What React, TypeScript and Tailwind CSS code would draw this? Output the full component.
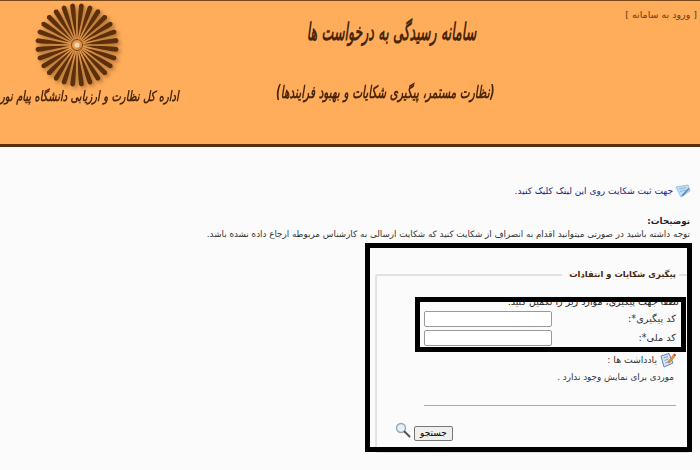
const petals = Array.from({ length: 28 }, (_, i) => (i * 360) / 28 + 6.4);

const Logo = () => (
  <svg width="90" height="90" viewBox="-45 -45 90 90" className="-mt-px drop-shadow-[2px_2px_2px_rgba(90,50,10,0.55)]">
    {petals.map((a) => (
      <path
        key={a}
        d="M0 -5 C-0.4 -14 -2.4 -26 -2.4 -40 Q0 -43.5 2.4 -40 C2.4 -26 0.4 -14 0 -5Z"
        fill="#5c300a"
        transform={`rotate(${a})`}
      />
    ))}
    <circle r="5.5" fill="none" stroke="#5c300a" strokeWidth="0.8" />
    <circle r="2.6" fill="#f3d3b0" />
  </svg>
);

const FormIcon = () => (
  <svg width="16" height="16" viewBox="0 0 16 16">
    <path d="M1 4 L13 2 L15 8 L6 14 Z" fill="#c4def4" stroke="#9cc3e4" strokeWidth="1" />
    <path d="M4 6 L11 4.5 M5 8.5 L11 7" stroke="#8db6da" strokeWidth="1" />
    <path d="M7 13 L14 5.5" stroke="#4f86b8" strokeWidth="1.6" />
  </svg>
);

const NoteIcon = () => (
  <svg width="16" height="16" viewBox="0 0 16 16">
    <path d="M1 4 L9 1.5 L13 11 L4 15 Z" fill="#d7e7f7" stroke="#5f86b5" strokeWidth="1" />
    <path d="M3.5 6 L8 4.5 M4.5 8.5 L8.5 7 M5.5 11 L9 9.5" stroke="#7b9cc4" strokeWidth="1" />
    <path d="M8 10 L14 2 L15.5 3.5 L9.5 11 Z" fill="#e8a020" stroke="#b5541a" strokeWidth="0.6" />
    <path d="M14 2 L15.5 3.5" stroke="#d8322a" strokeWidth="1.5" />
  </svg>
);

const SearchIcon = () => (
  <svg width="16" height="16" viewBox="0 0 16 16">
    <circle cx="6" cy="6" r="4.5" fill="#e6eef6" stroke="#97a5b5" strokeWidth="1.3" />
    <path d="M9.5 9.5 L14.5 14.5" stroke="#555" strokeWidth="2" strokeLinecap="round" />
  </svg>
);

export default function App() {
  return (
    <div dir="rtl" className="relative h-[470px] w-[700px] overflow-hidden bg-[#fbfbfb] font-['DejaVu_Sans',sans-serif] text-[8.75px] text-[#333]">
      <header className="flex h-[147px] border-t border-b-[3px] border-t-[#7a4a1c] border-b-[#5c2d0a] bg-[#ffad5b]">
        <div className="w-[207px] shrink-0 pt-[7px] pr-[3px]">
          <a href="#" className="text-[9.5px] leading-[14px] text-[#6b3a10]">[ ورود به سامانه ]</a>
        </div>
        <div className="flex w-[215px] shrink-0 flex-col items-center pt-[13px] font-bold text-[#4a2608] italic">
          <h1 className="w-max shrink-0 translate-x-[6px] scale-x-[0.525] text-[24px] leading-[36px] whitespace-nowrap">سامانه رسیدگی به درخواست ها</h1>
          <p className="mt-[29px] w-max shrink-0 scale-x-[0.62] text-[17px] leading-[26px] whitespace-nowrap">(نظارت مستمر، پیگیری شکایات و بهبود فرایندها)</p>
        </div>
        <div className="flex flex-1 flex-col items-end">
          <div className="ml-[32px] flex">
            <Logo />
          </div>
          <p className="-mt-[6px] w-max origin-left scale-x-[0.71] text-[14px] leading-[24px] font-bold whitespace-nowrap text-[#4a2608] italic">اداره کل نظارت و ارزیابی دانشگاه پیام نور</p>
        </div>
      </header>

      <main className="pr-[10px]">
        <a href="#" className="mt-[36px] mr-[-1px] flex items-center gap-[2px] text-[9px] leading-[16px] text-[#1a237e]">
          <FormIcon />
          جهت ثبت شکایت روی این لینک کلیک کنید.
        </a>
        <h3 className="mt-[16px] leading-[13px] font-bold text-[#222]">توضیحات:</h3>
        <p className="leading-[13px] text-[#333]">
          توجه داشته باشید در صورتی میتوانید اقدام به انصراف از شکایت کنید که شکایت ارسالی به کارشناس مربوطه ارجاع داده نشده باشد.
        </p>

        <fieldset className="mt-[27px] mr-[-1px] ml-[375px] h-[185px] rounded-[3px] border-2 border-[#e2e2e2] pr-[13px] pl-[47px]">
          <legend className="mr-[-3px] h-[13px] pr-[3px] pl-[7px] text-[8.4px] leading-[13px] font-bold text-[#4a2608]">پیگیری شکایات و انتقادات</legend>
          <p className="mt-[15px] mr-[-3px] ml-[-40px] text-[9.5px] leading-[12px] whitespace-nowrap text-[#222]">لطفا جهت پیگیری، موارد زیر را تکمیل کنید.</p>
          <div className="mt-[3px] flex flex-col gap-[3px] text-[9.75px]">
            <label className="flex h-[16px] items-center justify-between">
              کد پیگیری*:
              <input className="h-[16px] w-[128px] rounded-[2px] border border-[#999] bg-white" />
            </label>
            <label className="flex h-[16px] items-center justify-between">
              کد ملی*:
              <input className="h-[16px] w-[128px] rounded-[2px] border border-[#999] bg-white" />
            </label>
          </div>
          <div className="mt-[6px] flex items-center gap-[3px] text-[9.25px]">
            <NoteIcon />
            یادداشت ها :
          </div>
          <p className="mt-[3px] mr-[2px] leading-[13px]">موردی برای نمایش وجود ندارد .</p>
          <hr className="mt-[21px] border-[#aaa]" />
          <div className="mt-[16px] ml-[-29px] flex items-start justify-end gap-[3px]">
            <button className="mt-[4px] h-[15px] w-[39px] rounded-[2px] border border-[#777] bg-[#efefef] text-[9px] leading-none text-black">جستجو</button>
            <SearchIcon />
          </div>
        </fieldset>
      </main>

      <div className="absolute top-[243px] left-[365px] h-[209px] w-[327px] border-[5px] border-black" />
      <div className="absolute top-[297px] left-[415px] h-[55px] w-[271px] border-[5px] border-black" />
    </div>
  );
}
